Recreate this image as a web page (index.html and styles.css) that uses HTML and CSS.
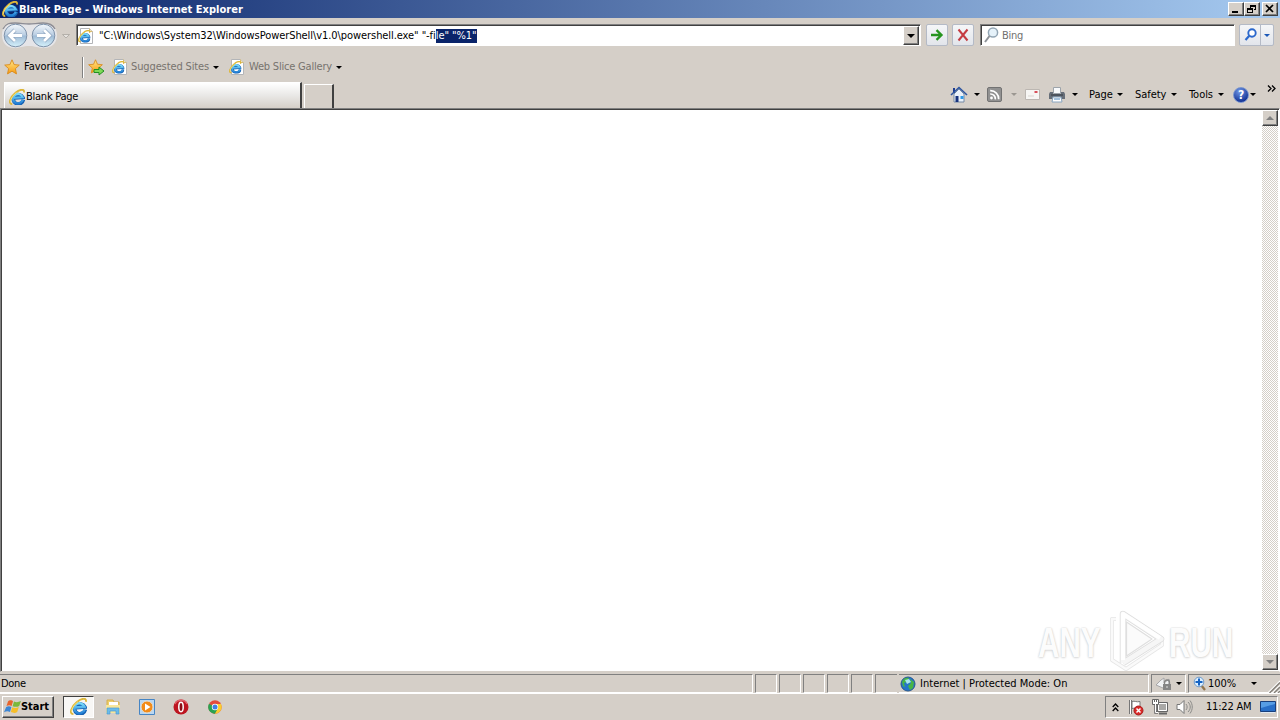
FILE: index.html
```
<!DOCTYPE html>
<html lang="en">
<head>
    <meta charset="UTF-8">
    <title>Blank Page - Windows Internet Explorer</title>
    <link rel="stylesheet" href="styles.css">
</head>
<body>

<!-- shared icons -->
<svg class="defs" width="0" height="0">
    <defs>
        <linearGradient id="blue" x1="0" y1="0" x2="0" y2="1">
            <stop offset="0" stop-color="#7bdcfb"/>
            <stop offset="1" stop-color="#2381d6"/>
        </linearGradient>
        <linearGradient id="ball" x1="0" y1="0" x2="0" y2="1">
            <stop offset="0" stop-color="#f4f8fc"/>
            <stop offset=".48" stop-color="#b9cde2"/>
            <stop offset=".52" stop-color="#9fbbd6"/>
            <stop offset="1" stop-color="#d6f2fc"/>
        </linearGradient>
        <linearGradient id="gold" x1="0" y1="0" x2="0" y2="1">
            <stop offset="0" stop-color="#ffe98a"/>
            <stop offset="1" stop-color="#f79a10"/>
        </linearGradient>
        <symbol id="ie" viewBox="0 0 16 16">
            <path d="M14.3 10.800A5 4.700 0 1 1 13.900 8.400L5.500 9" fill="none" stroke="#1762b3" stroke-width="3.600"/>
            <path d="M13.800 10.800A5 4.700 0 1 1 13.700 8.300L5 8.900" fill="none" stroke="url(#blue)" stroke-width="2.300"/>
            <path d="M3.200 15C-1.200 15.400 1.200 8 6.500 3.800 11-.1 16-.4 14.900 3.600" fill="none" stroke="#dcb63a" stroke-width="1.800"/>
            <path d="M2 13.500C.5 12 3.500 6.500 7.500 3.500" fill="none" stroke="#f9ea8c" stroke-width=".8"/>
        </symbol>
        <symbol id="iepage" viewBox="0 0 16 16">
            <path d="M2.500.5h9l3 3v12h-12z" fill="#fff" stroke="#b3b5b8"/>
            <path d="M11.500.5v3h3" fill="#f0e2b8" stroke="#d8bd78"/>
            <use href="#ie" x="0" y="2" width="12.500" height="12.500"/>
        </symbol>
        <symbol id="star" viewBox="0 0 16 16">
            <path d="M8 .8l2.100 4.800 5.200.5-3.900 3.500 1.100 5.300L8 12.200l-4.500 2.700 1.100-5.300L.7 6.100l5.200-.5z" fill="url(#gold)" stroke="#d98a1c" stroke-width=".9"/>
        </symbol>
    </defs>
</svg>

<div class="titlebar">
    <svg class="title-icon" width="17" height="16"><use href="#ie" width="16" height="16"/></svg>
    <span class="title">Blank Page - Windows Internet Explorer</span>
    <div class="window-buttons">
        <div class="btn3d"><svg width="12" height="10"><path d="M2 7h6v2H2z"/></svg></div>
        <div class="btn3d"><svg width="12" height="10"><path d="M4 1h6v5H8V5h1V3H5v1H4zM1 4h6v5H1zM2 6v2h4V6z" fill-rule="evenodd"/></svg></div>
        <div class="btn3d close"><svg width="12" height="10"><path d="M2 1l7 7M9 1L2 8" stroke="#000" stroke-width="1.700"/></svg></div>
    </div>
</div>

<div class="navbar">
    <svg class="travel" width="74" height="28">
        <path d="M2 13C2 4 8 1 15 1c6 0 9 1 14 1s8-1 14-1c8 0 14 4 14 12s-5 13-13 13c-6 0-9-2-15-2s-9 2-15 2C7 26 2 21 2 13z" fill="#e5e5e8"/>
        <path d="M3 7C6 1 10 1 15 1c6 0 9 1 14 1s8-1 14-1c6 0 10 2 12 6" fill="none" stroke="#8c8c94" stroke-width="1.300"/>
        <circle cx="15.500" cy="13.500" r="11.300" fill="url(#ball)" stroke="#7d91a9"/>
        <circle cx="43.500" cy="13.500" r="11.300" fill="url(#ball)" stroke="#7d91a9"/>
        <path d="M22 13.500H10M15 8l-5.500 5.500L15 19" fill="none" stroke="#8fa6c0" stroke-width="4.200"/>
        <path d="M22 13.500H10M15 8l-5.500 5.500L15 19" fill="none" stroke="#fff" stroke-width="2.800"/>
        <path d="M37 13.500h12M44 8l5.500 5.500L44 19" fill="none" stroke="#8fa6c0" stroke-width="4.200"/>
        <path d="M37 13.500h12M44 8l5.500 5.500L44 19" fill="none" stroke="#fff" stroke-width="2.800"/>
        <path d="M62.500 12.500h7l-3.500 3.500z" fill="#e6e3df" stroke="#aaa6a0" stroke-width=".8"/>
    </svg>
    <div class="address">
        <svg width="16" height="16"><use href="#iepage" width="16" height="16"/></svg>
        <span class="url">"C:\Windows\System32\WindowsPowerShell\v1.0\powershell.exe" "-fi<mark>le" "%1"</mark></span>
        <div class="btn3d drop"><i class="arrow wide"></i></div>
    </div>
    <div class="tool go"><svg width="16" height="16"><path d="M2 8h10M7.500 3.200L12.500 8l-5 4.800" fill="none" stroke="#26941f" stroke-width="2.300"/></svg></div>
    <div class="tool stop"><svg width="16" height="16"><path d="M3.500 2.500l9 11M12.500 2.500l-9 11" stroke="#c53b42" stroke-width="2"/></svg></div>
    <div class="search">
        <svg width="17" height="18"><circle cx="10" cy="6.500" r="4.600" fill="#e6f2fa" stroke="#93a6b5" stroke-width="1.500"/><path d="M6.500 10L2 16" stroke="#8d9298" stroke-width="2"/></svg>
        <span>Bing</span>
    </div>
    <div class="tool find">
        <svg width="19" height="18"><circle cx="11" cy="7" r="3.700" fill="#fff" stroke="#2b68cc" stroke-width="1.900"/><path d="M8.300 9.800L4.500 14" stroke="#2b68cc" stroke-width="2.200"/></svg>
        <div class="find-drop"><i class="arrow blue"></i></div>
    </div>
</div>

<div class="favbar">
    <svg width="17" height="17"><use href="#star" width="16" height="16"/></svg>
    <span class="fav">Favorites</span>
    <i class="divider"></i>
    <svg class="addfav" width="18" height="17"><use href="#star" width="15" height="15"/><path d="M6 10.500h5V8l5 4-5 4v-2.500H6z" fill="#7ed957" stroke="#239022"/></svg>
    <svg class="page-icon" width="16" height="16"><use href="#iepage" width="16" height="16"/></svg>
    <span class="link sites">Suggested Sites</span><i class="arrow"></i>
    <svg class="page-icon second" width="16" height="16"><use href="#iepage" width="16" height="16"/></svg>
    <span class="link slices">Web Slice Gallery</span><i class="arrow"></i>
</div>

<div class="tabrow">
    <div class="tab">
        <svg width="16" height="16"><use href="#ie" width="16" height="16"/></svg>
        <span>Blank Page</span>
    </div>
    <div class="newtab"></div>
    <div class="commands">
        <svg class="home" width="18" height="18">
            <path d="M3 2h2v5H3z" fill="#1d3c90"/>
            <path d="M4 8l5-5 5 5v8H4z" fill="#eaf2fb" stroke="#768ba5"/>
            <path d="M1 9l8-7.500L17 9" fill="none" stroke="#2d559f" stroke-width="1.600"/>
            <path d="M5.500 10h3v6h-3z" fill="#16327d"/><path d="M10.500 10h3v3h-3z" fill="#2f9ae8"/>
        </svg>
        <i class="arrow a1"></i>
        <svg class="rss" width="15" height="15">
            <rect x=".5" y=".5" width="14" height="14" rx="1.500" fill="#919191" stroke="#727272"/>
            <circle cx="4.500" cy="11" r="1.400" fill="#fff"/>
            <path d="M3.200 7A4.800 4.800 0 0 1 8.300 12.300M3.200 3.600A8.200 8.200 0 0 1 11.700 12.300" fill="none" stroke="#fff" stroke-width="1.700"/>
        </svg>
        <i class="arrow a2 off"></i>
        <svg class="mail" width="15" height="11"><path d="M.5.500h14v10H.5z" fill="#f7f6f4" stroke="#bcb7b2"/><path d="M9.500 2h3v2h-3z" fill="#d8505a"/><path d="M3 7h6" stroke="#d9d6d1"/></svg>
        <svg class="print" width="17" height="16">
            <path d="M4.500.5h7v6h-7z" fill="#f8fafc" stroke="#9da4ab"/>
            <path d="M1 5h3v2h8V5h3l1 2v5H0V7z" fill="#666e78"/>
            <path d="M2 8h12" stroke="#353b43"/>
            <path d="M4 10h8l1 5H3z" fill="#fff" stroke="#89a5bf"/><path d="M5 12h6" stroke="#4b86bd"/>
        </svg>
        <i class="arrow a3"></i>
        <span class="c-page">Page</span><i class="arrow"></i>
        <span class="c-safety">Safety</span><i class="arrow"></i>
        <span class="c-tools">Tools</span><i class="arrow"></i>
        <div class="help">?</div><i class="arrow a4"></i>
        <svg class="chevrons" width="9" height="7"><path d="M1 .5l3 3-3 3M5 .5l3 3-3 3" fill="none" stroke="#000" stroke-width="1.300"/></svg>
    </div>
</div>

<div class="viewport">
    <div class="page"></div>
    <div class="scrollbar">
        <div class="btn3d"><i class="arrow up"></i></div>
        <div class="btn3d"><i class="arrow wide grey"></i></div>
    </div>
    <div class="watermark">
        <span class="any">ANY</span>
        <svg width="58" height="64">
            <g fill="none" stroke-linejoin="round">
                <path d="M9 11H5v41l14 9 36-24v-8" stroke="#e6e6e6" stroke-width="4"/>
                <path d="M9 11H5v41l14 9 36-24v-8" stroke="#fafafa" stroke-width="2.500"/>
                <path d="M16 55V6l38 25-38 24" stroke="#dedede" stroke-width="6.500"/>
                <path d="M16 55V6l38 25-38 24" stroke="#f6f6f6" stroke-width="5"/>
                <path d="M16 52V6l37 24" stroke="#fff" stroke-width="4"/>
                <path d="M19.500 14v34L45 31z" fill="#fbfbfb" stroke="#dfdfdf" stroke-width="1.200"/>
            </g>
        </svg>
        <span class="run">RUN</span>
    </div>
</div>

<div class="statusbar">
    <div class="pane done">Done</div>
    <div class="pane small"></div>
    <div class="pane small"></div>
    <div class="pane small"></div>
    <div class="pane small"></div>
    <div class="pane small"></div>
    <div class="pane small last"></div>
    <div class="pane zone">
        <svg width="16" height="16"><circle cx="8" cy="8" r="7" fill="#2474c9" stroke="#27568c"/><path d="M2 6c1-4 5-5 7-4L7 6l-3 1 1 4-2-1zM10 3l4 3-1 6-3 2-2-4 3-3z" fill="#47b446"/><path d="M5 4l4-1 2 3-4 2z" fill="#a9e5ed"/></svg>
        <span>Internet | Protected Mode: On</span>
    </div>
    <div class="pane privacy">
        <svg width="18" height="16"><path d="M1 9l5-5 3-2v5l5-4v5l-6 4z" fill="#f1f2f4" stroke="#a6a6a8"/><path d="M9.500 8V6.500a2.500 2.500 0 0 1 5 0V8" fill="none" stroke="#858585" stroke-width="1.300"/><path d="M8 8h8v6H8z" fill="#858585"/><path d="M12 10v2" stroke="#ddd"/></svg>
        <i class="arrow"></i>
    </div>
    <div class="pane zoom">
        <svg width="14" height="16"><path d="M8 9l4 5" stroke="#94764e" stroke-width="2.300"/><circle cx="6" cy="6" r="4.800" fill="#dcefff" stroke="#6f9ac9"/><path d="M6 2.500v7M2.500 6h7" stroke="#1664c4" stroke-width="2"/></svg>
        <span>100%</span><i class="arrow"></i>
        <svg class="grip" width="12" height="13"><path d="M0 13L12 1M4.500 13L12 5.500M9 13l3-3" stroke="#fff" stroke-width="1.300"/><path d="M1.500 13L12 2.500M6 13l6-6M10 13l2-2" stroke="#85817a" stroke-width="1.500"/></svg>
    </div>
</div>

<div class="taskbar">
    <div class="btn3d start">
        <svg width="17" height="16"><path d="M4 2.500c2-2 4-1 5-.3L7.600 7C6 6 4.500 6 2.500 7z" fill="#e8642c"/><path d="M10 2.500c2 1 4 1 7-.4L15.200 7c-2 1.200-4.500 1-6.600.2z" fill="#7bb83c"/><path d="M2.200 8c2-1.200 3.500-1 5.200 0L6 13c-2-1-3.500-1-6 .2z" fill="#3c86d4"/><path d="M8.300 8.200c2 1 4 1 6.500-.2L13.200 13c-2 1.300-4 1-6.400.1z" fill="#f6be28"/></svg>
        <span>Start</span>
    </div>
    <div class="running"><svg width="18" height="18"><use href="#ie" width="17" height="17"/></svg></div>
    <svg class="folder" width="16" height="16"><path d="M2 1h6l1 2h5v10H2z" fill="#edcf69" stroke="#d6ae4c"/><path d="M4 3h9v3H4z" fill="#fff"/><path d="M1 6h14v8H1z" fill="#f7e69b"/><path d="M2 15V9h12v6h-3v-3H5v3z" fill="#6bbbea" stroke="#4a9bd1" stroke-width=".7"/></svg>
    <svg class="player" width="16" height="16"><path d="M.5.500h15v15H.5z" fill="#b9d7f2" stroke="#4685c4"/><circle cx="8" cy="8" r="6" fill="#f28b18" stroke="#e5ddd0"/><path d="M6 4.500v7L11.500 8z" fill="#fff"/></svg>
    <svg class="opera" width="16" height="16"><circle cx="8" cy="8" r="7.500" fill="#bd1520"/><path d="M2 5c2-5 10-5 12 0" fill="none" stroke="#df6269" stroke-width="1.500"/><ellipse cx="8" cy="8" rx="2.200" ry="4.700" fill="#8b0e16" stroke="#fff" stroke-width="1.500"/></svg>
    <svg class="chrome" width="14" height="14"><circle cx="7" cy="7" r="6.700" fill="#e34a3c"/><path d="M7 7L1 3.800A6.700 6.700 0 0 0 7 13.700L10 9z" fill="#29a352"/><path d="M7 4h6a6.700 6.700 0 0 1-6 9.700L10 8z" fill="#fbcd30"/><circle cx="7" cy="7" r="3.200" fill="#fff"/><circle cx="7" cy="7" r="2.500" fill="#3f7fe5"/></svg>
    <div class="tray">
        <svg class="more" width="7" height="9"><path d="M.7 4l2.800-3 2.800 3M.7 8l2.800-3 2.800 3" fill="none" stroke="#000" stroke-width="1.300"/></svg>
        <svg class="flag" width="17" height="17"><path d="M2.500 1v14" stroke="#777" stroke-width="3"/><path d="M2.500 1v14" stroke="#fff"/><path d="M4 2.500c3-1 4 1 8 0v7c-4 1-5-1-8 0z" fill="#fff" stroke="#777"/><circle cx="10.500" cy="11.500" r="4.500" fill="#db2927" stroke="#a91d1d"/><path d="M8.500 9.500l4 4M12.500 9.500l-4 4" stroke="#fff" stroke-width="1.500"/></svg>
        <svg class="network" width="17" height="16"><path d="M5.500 3.500h10v9h-10z" fill="#a9a8a6" stroke="#666"/><path d="M6.500 4.500h8v7h-8z" fill="none" stroke="#fff"/><path d="M7 14.500h8" stroke="#666" stroke-width="2"/><path d="M.5.500h6v5h-6z" fill="#fff" stroke="#666"/><path d="M2.500 0v3M4.500 0v3" stroke="#666"/><path d="M3.500 6v7.500H6" fill="none" stroke="#666" stroke-width="2.500"/><path d="M3.500 5v8.500H6" fill="none" stroke="#fff"/></svg>
        <svg class="volume" width="17" height="16"><path d="M1 5.500h3l4-4v13l-4-4H1z" fill="#fff" stroke="#777"/><path d="M10 5c1.500 2 1.500 4 0 6M12 3c3 3 3 7 0 10M14 1.500c3 4 3 9 0 13" fill="none" stroke="#8b8b89"/></svg>
        <span class="clock">11:22 AM</span>
        <svg class="desktop" width="16" height="14"><path d="M.5 1.500h15v10H.5z" fill="#286fc8" stroke="#183f7c"/><path d="M1 2h14v2L1 8z" fill="#569de5"/><path d="M1 12.500h14" stroke="#dfe8f2"/></svg>
    </div>
</div>

</body>
</html>
```
FILE: styles.css
```
* {
    box-sizing: border-box;
}

body {
    margin: 0;
    width: 1280px;
    height: 720px;
    overflow: hidden;
    display: flex;
    flex-direction: column;
    background: #d5cfc8;
    font: 11px/14px "DejaVu Sans Condensed", Tahoma, sans-serif;
    letter-spacing: -0.05px;
    color: #000;
    white-space: nowrap;
}

svg {
    display: block;
    flex: none;
}

span,
i {
    flex: none;
}

.defs {
    position: absolute;
}

/* raised classic button */
.btn3d {
    display: flex;
    align-items: center;
    justify-content: center;
    background: #d5cfc8;
    border: 1px solid;
    border-color: #fff #404040 #404040 #fff;
    box-shadow: inset -1px -1px #808080;
}

.arrow {
    border: 3px solid transparent;
    border-top-color: #000;
    border-bottom: 0;
}

.arrow.wide { border-width: 4px 4px 0; }
.arrow.blue { border-top-color: #1b58b8; }
.arrow.off { border-top-color: #9b9791; }
.arrow.grey { border-top-color: #808080; }

.arrow.up {
    border: 4px solid transparent;
    border-top: 0;
    border-bottom-color: #808080;
}

/* title bar */
.titlebar {
    height: 18px;
    flex: none;
    display: flex;
    align-items: center;
    padding-left: 2px;
    background: linear-gradient(to right, #0a246a, #a6caf0);
    color: #fff;
}

.title {
    padding-top: 1px;
    font-weight: bold;
    letter-spacing: 0.03px;
}

.window-buttons {
    display: flex;
    margin: 0 2px 0 auto;
}

.window-buttons .btn3d {
    width: 16px;
    height: 14px;
}

.window-buttons .close { margin-left: 2px; }

/* address row */
.navbar {
    height: 35px;
    flex: none;
    display: flex;
    padding-top: 6px;
}

.travel {
    margin-top: -2px;
}

.address,
.search {
    display: flex;
    align-items: center;
    height: 22px;
    background: #fff;
    border: 1px solid;
    border-color: #808080 #fff #fff #808080;
    box-shadow: inset 1px 1px #404040;
}

.address {
    width: 845px;
    margin-left: 2px;
    padding: 1px 1px 0 1px;
}

.url {
    margin-left: 5px;
    letter-spacing: -0.07px;
}

.url mark {
    display: inline-block;
    height: 14px;
    background: #0a246a;
    color: #fff;
}

.drop {
    width: 16px;
    height: 19px;
    margin-left: auto;
}

.tool {
    display: flex;
    align-items: center;
    justify-content: center;
    width: 22px;
    height: 22px;
    background: linear-gradient(#f5f6f8, #e2e5eb);
    border: 1px solid #b4bac6;
    border-radius: 2px;
}

.go { margin-left: 5px; }
.stop { margin-left: 4px; }

.search {
    width: 255px;
    margin-left: 6px;
    padding-left: 2px;
    color: #707070;
}

.search span {
    margin-left: 2px;
    padding-top: 2px;
    letter-spacing: -0.3px;
}

.find {
    width: 35px;
    margin-left: 4px;
}

.find-drop {
    display: flex;
    align-items: center;
    justify-content: center;
    width: 13px;
    height: 20px;
    border-left: 1px solid #b4bac6;
}

/* favorites row */
.favbar {
    height: 29px;
    flex: none;
    display: flex;
    align-items: center;
    padding: 0 0 1px 4px;
}

.fav {
    width: 58px;
    margin-left: 3px;
}

.divider {
    width: 2px;
    height: 21px;
    border-left: 1px solid #808080;
    border-right: 1px solid #fff;
}

.addfav { margin-left: 4px; }
.page-icon { margin-left: 6px; }
.page-icon.second { margin-left: 10px; }

.link {
    margin-left: 3px;
    color: #77736e;
}

.sites {
    width: 82px;
    letter-spacing: -0.12px;
}

.slices {
    width: 87px;
    margin-left: 4px;
    letter-spacing: -0.2px;
}

/* tabs and command bar */
.tabrow {
    height: 26px;
    flex: none;
    display: flex;
    align-items: flex-end;
    padding-left: 4px;
}

.tab {
    display: flex;
    align-items: center;
    width: 298px;
    height: 26px;
    padding: 2px 0 0 4px;
    background: linear-gradient(to bottom, #fff, #e9e8e6 50%, #d5cfc8);
    border: 1px solid #fff;
    border-right: 2px solid #404040;
    border-bottom: 0;
}

.tab span {
    margin-left: 1px;
    letter-spacing: -0.25px;
}

.newtab {
    width: 30px;
    height: 24px;
    margin-left: 2px;
    border: 1px solid #fff;
    border-right: 2px solid #404040;
    border-bottom: 0;
}

.commands {
    display: flex;
    align-items: center;
    height: 26px;
    margin-left: 616px;
    padding-bottom: 1px;
}

.a1 { margin-left: 6px; }
.rss { margin-left: 7px; }
.a2 { margin-left: 9px; }
.mail { margin-left: 8px; }
.print { margin-left: 9px; }
.a3 { margin-left: 6px; }

.c-page { width: 28px; margin-left: 11px; }
.c-safety { width: 36px; margin-left: 12px; }
.c-tools { width: 29px; margin-left: 12px; }

.help {
    width: 16px;
    height: 16px;
    margin-left: 9px;
    border: 1px solid #7894ce;
    border-radius: 50%;
    background: radial-gradient(circle at 40% 25%, #7097e6, #153597 75%);
    color: #fff;
    font-size: 12px;
    font-weight: bold;
    line-height: 14px;
    text-align: center;
}

.a4 { margin-left: 1px; }

.chevrons {
    margin: -13px 0 0 11px;
}

/* page area */
.viewport {
    position: relative;
    height: 564px;
    flex: none;
    display: flex;
    background: #fff;
    border: 1px solid;
    border-color: #808080 #fff #d5cfc8 #808080;
    box-shadow: inset 1px 1px #404040;
}

.page { flex: 1; }

.scrollbar {
    display: flex;
    flex-direction: column;
    justify-content: space-between;
    width: 16px;
    margin: 1px 1px 1px 0;
    background: repeating-conic-gradient(#fff 0 25%, #d5cfc8 0 50%) 0 0 / 2px 2px;
}

.scrollbar .btn3d { height: 16px; }

.watermark {
    position: absolute;
    right: 46px;
    bottom: 0;
    display: flex;
    align-items: center;
    height: 62px;
    color: #fcfcfc;
    font: bold 43px/50px "Liberation Sans", Arial, sans-serif;
    letter-spacing: 0;
    text-shadow: 0 0 2px #c8c8c8, 0 1px 3px #ddd;
}

.any,
.run {
    transform: scaleX(0.69);
    transform-origin: left;
}

.any {
    width: 69px;
    padding-top: 3px;
}

.run {
    width: 64px;
    margin-left: 4px;
    padding-top: 3px;
}

/* status bar */
.statusbar {
    height: 21px;
    flex: none;
    display: flex;
    padding-top: 2px;
}

.pane {
    display: flex;
    align-items: center;
    height: 19px;
    margin-right: 2px;
    border: 1px solid;
    border-color: #808080 #fff #fff #808080;
}

.done {
    width: 753px;
    border-left: 0;
    padding-left: 1px;
    letter-spacing: -0.3px;
}

.small { width: 22px; }
.small.last { border-right: 0; }

.zone {
    width: 250px;
    border-left: 0;
    padding-left: 1px;
}

.zone span {
    margin-left: 4px;
    letter-spacing: 0.02px;
}

.privacy {
    width: 35px;
    padding-left: 3px;
}

.privacy .arrow { margin-left: 3px; }

.zoom {
    width: 92px;
    margin-right: 0;
    padding-left: 4px;
    border-right: 0;
}

.zoom span {
    width: 43px;
    margin-left: 1px;
}

.grip {
    margin: 5px 0 0 auto;
}

/* taskbar */
.taskbar {
    flex: 1;
    display: flex;
    align-items: center;
    padding: 0 2px;
    border-top: 1px solid #fff;
}

.start {
    width: 52px;
    height: 22px;
    justify-content: flex-start;
    padding-left: 1px;
    font-weight: bold;
}

.start span { letter-spacing: -0.05px; }

.running {
    display: flex;
    align-items: center;
    justify-content: center;
    width: 31px;
    height: 22px;
    margin-left: 9px;
    border: 1px solid;
    border-color: #404040 #fff #fff #404040;
    background: #f8f7f5;
}

.folder { margin-left: 11px; }
.player { margin-left: 18px; }
.opera { margin-left: 18px; }
.chrome { margin-left: 19px; }

.tray {
    display: flex;
    align-items: center;
    width: 173px;
    height: 22px;
    margin-left: auto;
    padding-left: 6px;
    border: 1px solid;
    border-color: #808080 #fff #fff #808080;
}

.flag { margin-left: 9px; }
.network { margin-left: 7px; }
.volume { margin-left: 7px; }

.clock {
    width: 47px;
    margin-left: 13px;
    letter-spacing: -0.2px;
}

.desktop { margin-left: 7px; }
```
